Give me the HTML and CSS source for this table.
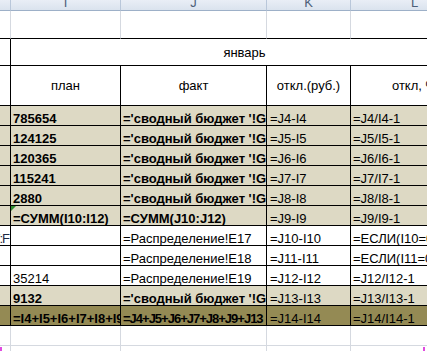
FILE: index.html
```html
<!DOCTYPE html>
<html lang="ru">
<head>
<meta charset="utf-8">
<title>Бюджет — январь</title>
<link rel="stylesheet" href="styles.css">
</head>
<body>
<div class="sheet">
  <div class="cell hd"></div>
  <div class="cell hd">I</div>
  <div class="cell hd">J</div>
  <div class="cell hd">K</div>
  <div class="cell hd">L</div>

  <div class="cell top"></div>
  <div class="cell top"></div>
  <div class="cell top"></div>
  <div class="cell top"></div>
  <div class="cell top"></div>

  <div class="cell bx"></div>
  <div class="cell bx ctr month">январь</div>

  <div class="cell bx"></div>
  <div class="cell bx ctr">план</div>
  <div class="cell bx ctr">факт</div>
  <div class="cell bx ctr">откл.(руб.)</div>
  <div class="cell bx ctr">откл, %</div>

  <div class="cell bx tan"></div>
  <div class="cell bx tan bold">785654</div>
  <div class="cell bx tan bold">='сводный бюджет '!G10</div>
  <div class="cell bx tan pk">=J4-I4</div>
  <div class="cell bx tan">=J4/I4-1</div>

  <div class="cell bx tan"></div>
  <div class="cell bx tan bold">124125</div>
  <div class="cell bx tan bold">='сводный бюджет '!G11</div>
  <div class="cell bx tan pk">=J5-I5</div>
  <div class="cell bx tan">=J5/I5-1</div>

  <div class="cell bx tan"></div>
  <div class="cell bx tan bold">120365</div>
  <div class="cell bx tan bold">='сводный бюджет '!G12</div>
  <div class="cell bx tan pk">=J6-I6</div>
  <div class="cell bx tan">=J6/I6-1</div>

  <div class="cell bx tan"></div>
  <div class="cell bx tan bold">115241</div>
  <div class="cell bx tan bold">='сводный бюджет '!G13</div>
  <div class="cell bx tan pk">=J7-I7</div>
  <div class="cell bx tan">=J7/I7-1</div>

  <div class="cell bx tan"></div>
  <div class="cell bx tan bold">2880</div>
  <div class="cell bx tan bold">='сводный бюджет '!G14</div>
  <div class="cell bx tan pk">=J8-I8</div>
  <div class="cell bx tan">=J8/I8-1</div>

  <div class="cell bx tan"></div>
  <div class="cell bx tan bold err">=СУММ(I10:I12)</div>
  <div class="cell bx tan bold">=СУММ(J10:J12)</div>
  <div class="cell bx tan pk">=J9-I9</div>
  <div class="cell bx tan">=J9/I9-1</div>

  <div class="cell bx end">E17:F</div>
  <div class="cell bx"></div>
  <div class="cell bx">=Распределение!E17</div>
  <div class="cell bx pk">=J10-I10</div>
  <div class="cell bx">=ЕСЛИ(I10=0;0;J10/I10-1)</div>

  <div class="cell bx"></div>
  <div class="cell bx"></div>
  <div class="cell bx">=Распределение!E18</div>
  <div class="cell bx pk">=J11-I11</div>
  <div class="cell bx">=ЕСЛИ(I11=0;0;J11/I11-1)</div>

  <div class="cell bx"></div>
  <div class="cell bx">35214</div>
  <div class="cell bx">=Распределение!E19</div>
  <div class="cell bx pk">=J12-I12</div>
  <div class="cell bx">=J12/I12-1</div>

  <div class="cell bx tan"></div>
  <div class="cell bx tan bold">9132</div>
  <div class="cell bx tan bold">='сводный бюджет '!G15</div>
  <div class="cell bx tan pk">=J13-I13</div>
  <div class="cell bx tan">=J13/I13-1</div>

  <div class="cell bx olive"></div>
  <div class="cell bx olive bold">=I4+I5+I6+I7+I8+I9+I13</div>
  <div class="cell bx olive bold tight">=J4+J5+J6+J7+J8+J9+J13</div>
  <div class="cell bx olive pk">=J14-I14</div>
  <div class="cell bx olive">=J14/I14-1</div>

  <div class="cell"></div>
  <div class="cell"></div>
  <div class="cell"></div>
  <div class="cell"></div>
  <div class="cell"></div>

  <div class="cell brk-left"></div>
  <div class="cell"></div>
  <div class="cell"></div>
  <div class="cell"></div>
  <div class="cell brk-right"></div>
</div>
</body>
</html>
```
FILE: styles.css
```css
html, body {
  margin: 0;
  padding: 0;
  background: #ffffff;
  overflow: hidden;
}

.sheet {
  display: grid;
  grid-template-columns: 11px 110px 146px 84px 128px;
  grid-template-rows: 11px 28px 27px 40px repeat(11, 20px) 20px 20px;
  width: 479px;
  font-family: "Liberation Sans", Arial, sans-serif;
  font-size: 13px;
  color: #000000;
}

.cell {
  box-sizing: border-box;
  display: flex;
  align-items: flex-end;
  padding: 0 2px;
  line-height: 13px;
  white-space: nowrap;
  overflow: hidden;
  border-right: 1px solid #d5d9e0;
  border-bottom: 1px solid #d5d9e0;
  background: #ffffff;
}

.hd {
  justify-content: center;
  overflow: visible;
  padding-bottom: 1px;
  color: #4d5f78;
  background: linear-gradient(#e9eef6, #dae3ee);
  border-right: 1px solid #b9c7da;
  border-bottom: 1px solid #9db0c8;
}

.top {
  border-bottom-color: #000000;
}

.bx {
  border-right-color: #000000;
  border-bottom-color: #000000;
}

.ctr {
  justify-content: center;
  align-items: center;
  line-height: 15px;
}

.month {
  grid-column: span 4;
}

.pk {
  padding-left: 3px;
}

.end {
  justify-content: flex-end;
  padding-right: 1px;
  letter-spacing: -1px;
  color: #1d2a44;
}

.tan {
  background: #ddd9c4;
}

.olive {
  background: #948a54;
}

.bold {
  font-weight: bold;
}

.tight {
  letter-spacing: -1px;
}

.err {
  position: relative;
}

.err::before {
  content: "";
  position: absolute;
  left: 0;
  top: 0;
  border-top: 5px solid #2f8a2f;
  border-right: 5px solid transparent;
}

.brk-left,
.brk-right {
  position: relative;
}

.brk-left::after,
.brk-right::after {
  content: "";
  position: absolute;
  top: 1px;
  width: 2px;
  height: 6px;
  background: #e04be0;
}

.brk-left::after {
  left: 0;
}

.brk-right::after {
  left: 72px;
}
```
